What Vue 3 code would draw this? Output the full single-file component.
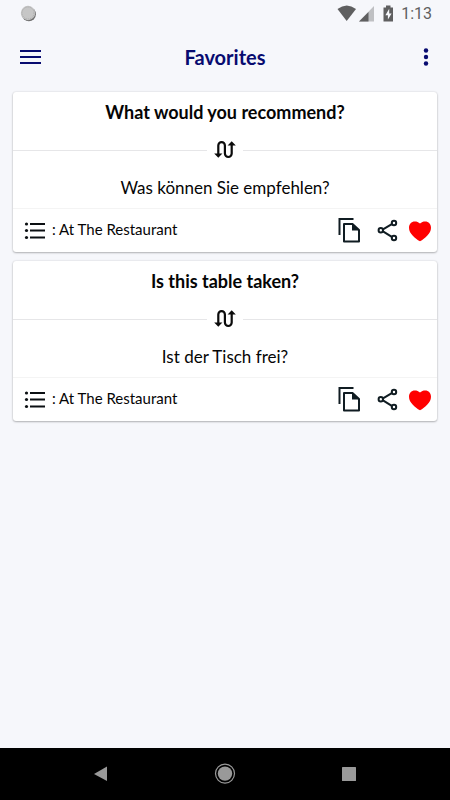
<script setup>
import { ref } from 'vue'

const phrases = ref([
  { id: 1, source: 'What would you recommend?', target: 'Was können Sie empfehlen?', category: 'At The Restaurant', liked: true },
  { id: 2, source: 'Is this table taken?', target: 'Ist der Tisch frei?', category: 'At The Restaurant', liked: true },
])
</script>

<template>
  <div class="screen">
    <div class="status">
      <svg class="spinner" width="18" height="18" viewBox="0 0 18 18" aria-hidden="true">
        <circle cx="9.900" cy="9.200" r="7" fill="#6f6f6f" />
        <circle cx="9" cy="8" r="7.200" fill="#c6c6c6" />
        <circle cx="9" cy="8" r="6" fill="none" stroke="#a9a9a9" stroke-width="1" stroke-dasharray="1 1" />
      </svg>
      <div class="signals">
        <svg width="58" height="18" viewBox="0 0 58 18" aria-hidden="true">
          <path d="M0.500 4Q9.700-3 19 4L9.700 16Z" fill="#5f5f60" />
          <path d="M37 1V16.500H22Z" fill="#bfc0c3" />
          <path d="M31.500 7V16.500H22Z" fill="#5f5f60" />
          <path d="M49 0.500h4.500v2H56v14h-9.500V2.500H49Z" fill="#5f5f60" />
          <path d="M52.200 3.800L48.400 10.200h2.500v4.300L54.600 8.400h-2.400Z" fill="#f6f7fb" />
        </svg>
        <span class="clock">1:13</span>
      </div>
    </div>

    <header class="bar">
      <button class="icon" aria-label="Menu">
        <svg width="22" height="16" viewBox="0 0 22 16"><path d="M0 2h21M0 8h21M0 14h21" stroke="#080b70" stroke-width="2" /></svg>
      </button>
      <h1>Favorites</h1>
      <button class="icon" aria-label="More options">
        <svg width="6" height="20" viewBox="0 0 6 20" fill="#080b70"><circle cx="3" cy="3.500" r="2.200" /><circle cx="3" cy="10" r="2.200" /><circle cx="3" cy="16.500" r="2.200" /></svg>
      </button>
    </header>

    <main class="list">
      <article v-for="p in phrases" :key="p.id" class="card">
        <h2>{{ p.source }}</h2>
        <div class="divider">
          <svg width="24" height="20" viewBox="0 0 24 20" aria-hidden="true">
            <path d="M5.300 14V5.400a3.300 3.300 0 0 1 6.600 0v8.200a3.400 3.400 0 0 0 6.800 0V5" fill="none" stroke="#0b0b0b" stroke-width="2.200" />
            <path d="M1.200 13.600h8.200L5.300 17.800ZM14.600 5.400h8.200L18.700 1.200Z" fill="#0b0b0b" />
          </svg>
        </div>
        <p class="target">{{ p.target }}</p>
        <footer>
          <svg width="22" height="18" viewBox="0 0 22 18" aria-hidden="true">
            <path d="M6 2h15M6 8.500h15M6 15.500h15" stroke="#0b0f12" stroke-width="2" />
            <g fill="#0b0f12"><circle cx="2.500" cy="2" r="1.600" /><circle cx="2.500" cy="8.500" r="1.600" /><circle cx="2.500" cy="15.500" r="1.600" /></g>
          </svg>
          <span class="category">: {{ p.category }}</span>
          <div class="actions">
            <button class="icon" aria-label="Copy">
              <svg width="22" height="26" viewBox="0 0 22 26">
                <path d="M1.500 17V1H15.500" fill="none" stroke="#101c22" stroke-width="2" />
                <path d="M6 6H14.500L21 12V23.500H6Z" fill="none" stroke="#101c22" stroke-width="2" stroke-linejoin="round" />
                <path d="M14 5.500V12.500H21Z" fill="#101c22" />
              </svg>
            </button>
            <button class="icon" aria-label="Share">
              <svg width="22" height="24" viewBox="0 0 22 24" fill="none" stroke="#101c22" stroke-width="2">
                <path d="M6 10.300L14.800 5.200M6 12.300L14.800 17.800" />
                <circle cx="3.800" cy="11.300" r="2.200" /><circle cx="17" cy="4" r="2.200" /><circle cx="17" cy="19" r="2.200" />
              </svg>
            </button>
            <button class="icon" aria-label="Favorite" :aria-pressed="p.liked" @click="p.liked = !p.liked">
              <svg width="22" height="22" viewBox="0 0 22 22">
                <path d="M11 3.600C12.400 2 14.300 1.400 16.200 1.400C19.600 1.400 22 4 22 7.700C22 13.500 16 18.300 11 21.300C6 18.300 0 13.500 0 7.700C0 4 2.400 1.400 5.800 1.400C7.700 1.400 9.600 2 11 3.600Z" :fill="p.liked ? '#ff0000' : '#b5b5b5'" />
              </svg>
            </button>
          </div>
        </footer>
      </article>
    </main>

    <nav class="system">
      <button class="icon" aria-label="Back"><svg width="22" height="22" viewBox="0 0 22 22"><path d="M17 3.500V18L4 11Z" fill="#999" /></svg></button>
      <button class="icon" aria-label="Home"><svg width="22" height="22" viewBox="0 0 22 22"><circle cx="11" cy="10.600" r="7.200" fill="#999" /><circle cx="11" cy="10.600" r="9.500" fill="none" stroke="#999" stroke-width="1.200" /></svg></button>
      <button class="icon" aria-label="Recent apps"><svg width="22" height="22" viewBox="0 0 22 22"><rect x="4" y="4" width="14" height="14" rx="0.500" fill="#999" /></svg></button>
    </nav>
  </div>
</template>

<style>
body {
  background: #f6f7fb;
}
</style>

<style scoped>
.screen {
  display: flex;
  flex-direction: column;
  min-height: 100vh;
  background: #f6f7fb;
  color: #050505;
  font-family: Lato, "Liberation Sans", sans-serif;
}
.status {
  display: flex;
  align-items: center;
  justify-content: space-between;
  height: 28px;
  padding: 0 18px 0 19px;
}
.spinner, .icon svg, .divider svg, footer svg {
  display: block;
}
.signals {
  display: flex;
  align-items: center;
  gap: 6px;
}
.clock {
  color: #5f5f60;
  font: 16px/28px Roboto, sans-serif;
}
.icon {
  display: block;
  padding: 0;
  border: 0;
  background: none;
  cursor: pointer;
}
.bar {
  display: grid;
  grid-template-columns: 40px 1fr 40px;
  align-items: center;
  height: 58px;
  padding: 0 20px;
}
.bar .icon:last-child {
  justify-self: end;
  padding-right: 1px;
}
h1 {
  margin: 0;
  color: #080b70;
  font-size: 20px;
  line-height: 24px;
  font-weight: 700;
  text-align: center;
}
.list {
  display: flex;
  flex: 1;
  flex-direction: column;
  gap: 9px;
  padding: 6px 13px;
}
.card {
  border-radius: 3px;
  background: #fff;
  box-shadow: 0 1px 2px rgba(0, 0, 0, 0.25), 0 0 2px rgba(0, 0, 0, 0.15);
}
h2, .target {
  margin: 0;
  padding: 8px 12px;
  line-height: 24px;
  text-align: center;
}
h2 {
  font-size: 18px;
  font-weight: 700;
}
.target {
  font-size: 17px;
}
.divider {
  display: flex;
  align-items: center;
  gap: 6px;
  height: 36px;
}
.divider::before, .divider::after {
  content: "";
  flex: 1;
  height: 1px;
  background: #e6e6e8;
}
footer {
  display: flex;
  align-items: center;
  height: 43px;
  padding: 0 6px 0 11px;
  border-top: 1px solid #f4f4f4;
}
.category {
  flex: 1;
  padding: 0 0 4px 6px;
  font-size: 15px;
  line-height: 20px;
}
.actions {
  display: flex;
  align-items: center;
}
.actions .icon {
  margin-left: 10px;
}
.actions .icon:first-child {
  margin-right: 7px;
}
</style>

<style scoped>
.system {
  display: flex;
  align-items: center;
  justify-content: center;
  gap: 102px;
  height: 52px;
  background: #000;
}
</style>
